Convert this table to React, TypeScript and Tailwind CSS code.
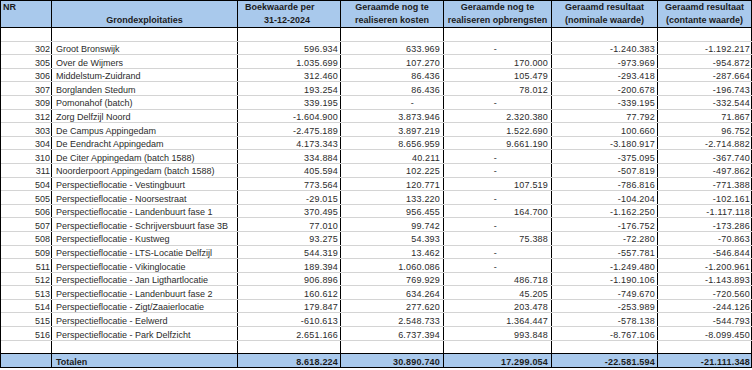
import React from 'react';

type Row = [string, string, string, string, string, string, string];

const ROWS: Row[] = [
  ['302', 'Groot Bronswijk', '596.934', '633.969', '-', '-1.240.383', '-1.192.217'],
  ['305', 'Over de Wijmers', '1.035.699', '107.270', '170.000', '-973.969', '-954.872'],
  ['306', 'Middelstum-Zuidrand', '312.460', '86.436', '105.479', '-293.418', '-287.664'],
  ['307', 'Borglanden Stedum', '193.254', '86.436', '78.012', '-200.678', '-196.743'],
  ['309', 'Pomonahof (batch)', '339.195', '-', '-', '-339.195', '-332.544'],
  ['312', 'Zorg Delfzijl Noord', '-1.604.900', '3.873.946', '2.320.380', '77.792', '71.867'],
  ['303', 'De Campus Appingedam', '-2.475.189', '3.897.219', '1.522.690', '100.660', '96.752'],
  ['304', 'De Eendracht Appingedam', '4.173.343', '8.656.959', '9.661.190', '-3.180.917', '-2.714.882'],
  ['310', 'De Citer Appingedam (batch 1588)', '334.884', '40.211', '-', '-375.095', '-367.740'],
  ['311', 'Noorderpoort Appingedam (batch 1588)', '405.594', '102.225', '-', '-507.819', '-497.862'],
  ['504', 'Perspectieflocatie - Vestingbuurt', '773.564', '120.771', '107.519', '-786.816', '-771.388'],
  ['505', 'Perspectieflocatie - Noorsestraat', '-29.015', '133.220', '-', '-104.204', '-102.161'],
  ['506', 'Perspectieflocatie - Landenbuurt fase 1', '370.495', '956.455', '164.700', '-1.162.250', '-1.117.118'],
  ['507', 'Perspectieflocatie - Schrijversbuurt fase 3B', '77.010', '99.742', '-', '-176.752', '-173.286'],
  ['508', 'Perspectieflocatie - Kustweg', '93.275', '54.393', '75.388', '-72.280', '-70.863'],
  ['509', 'Perspectieflocatie - LTS-Locatie Delfzijl', '544.319', '13.462', '-', '-557.781', '-546.844'],
  ['511', 'Perspectieflocatie - Vikinglocatie', '189.394', '1.060.086', '-', '-1.249.480', '-1.200.961'],
  ['512', 'Perspectieflocatie - Jan Ligthartlocatie', '906.896', '769.929', '486.718', '-1.190.106', '-1.143.893'],
  ['513', 'Perspectieflocatie - Landenbuurt fase 2', '160.612', '634.264', '45.205', '-749.670', '-720.560'],
  ['514', 'Perspectieflocatie - Zigt/Zaaierlocatie', '179.847', '277.620', '203.478', '-253.989', '-244.126'],
  ['515', 'Perspectieflocatie - Eelwerd', '-610.613', '2.548.733', '1.364.447', '-578.138', '-544.793'],
  ['516', 'Perspectieflocatie - Park Delfzicht', '2.651.166', '6.737.394', '993.848', '-8.767.106', '-8.099.450'],
];

const GRID = 'grid grid-cols-[51px_186px_103px_103px_108px_106px_94px]';
const CELL = 'border-r border-black overflow-hidden whitespace-nowrap';

// dash placement differs per column (excel accounting format)
const DASH_PAD = ['pr-[2px]', 'pr-[29px]', 'pr-[54px]', 'pr-[2px]', 'pr-[2px]'];
const NUM_PAD = ['pr-[2px]', 'pr-[3px]', 'pr-[3px]', 'pr-[2px]', 'pr-[1px]'];

function DataRow({ row }: { row?: Row }) {
  return (
    <div className={`${GRID} h-[13.6px] border-b border-[#d4d4d4] text-[9px] leading-[12px] text-[#2b2b2b]`}>
      <div className={`${CELL} text-right pr-[1px] pt-[1.5px]`}>{row?.[0]}</div>
      <div className={`${CELL} pl-[4px] pt-[1.5px]`}>{row?.[1]}</div>
      {[2, 3, 4, 5, 6].map((i, k) => (
        <div
          key={i}
          className={`${CELL} text-right pt-[1.5px] tracking-[0.2px] ${row?.[i] === '-' ? DASH_PAD[k] : NUM_PAD[k]}`}
        >
          {row?.[i]}
        </div>
      ))}
    </div>
  );
}

export default function App() {
  return (
    <div className="w-[752px] bg-white font-['Liberation_Sans',Arial,sans-serif]">
      <div className="border-l border-black">
        {/* header */}
        <div className={`${GRID} h-[28px] border-t border-b border-black bg-[#a9c9ec] text-[9px] font-bold leading-[13px] text-[#1c1c1c]`}>
          <div className={`${CELL} pl-[2px]`}>NR</div>
          <div className={`${CELL} text-center pt-[13px]`}>Grondexploitaties</div>
          <div className={CELL}>
            <div className="pl-[7px]">Boekwaarde per</div>
            <div className="pl-[26px]">31-12-2024</div>
          </div>
          <div className={`${CELL} text-center`}>
            <div>Geraamde nog te</div>
            <div>realiseren kosten</div>
          </div>
          <div className={`${CELL} text-center`}>
            <div>Geraamde nog te</div>
            <div>realiseren opbrengsten</div>
          </div>
          <div className={`${CELL} text-center`}>
            <div>Geraamd resultaat</div>
            <div>(nominale waarde)</div>
          </div>
          <div className={`${CELL} text-center`}>
            <div>Geraamd resultaat</div>
            <div>(contante waarde)</div>
          </div>
        </div>

        <DataRow />
        {ROWS.map((r) => (
          <DataRow key={r[0]} row={r} />
        ))}

        {/* empty row before totals */}
        <div className={`${GRID} h-[12.4px]`}>
          {[0, 1, 2, 3, 4, 5, 6].map((i) => (
            <div key={i} className={CELL} />
          ))}
        </div>

        {/* totals */}
        <div className={`${GRID} h-[15px] border-t border-b border-black bg-[#a9c9ec] text-[9px] font-bold leading-[10px] text-[#1c1c1c]`}>
          <div className={CELL} />
          <div className={`${CELL} pl-[4px] pt-[3px]`}>Totalen</div>
          <div className={`${CELL} text-right pr-[2px] pt-[3px] tracking-[0.2px]`}>8.618.224</div>
          <div className={`${CELL} text-right pr-[3px] pt-[3px] tracking-[0.2px]`}>30.890.740</div>
          <div className={`${CELL} text-right pr-[3px] pt-[3px] tracking-[0.2px]`}>17.299.054</div>
          <div className={`${CELL} text-right pr-[2px] pt-[3px] tracking-[0.2px]`}>-22.581.594</div>
          <div className={`${CELL} text-right pr-[1px] pt-[3px] tracking-[0.2px]`}>-21.111.348</div>
        </div>
      </div>
    </div>
  );
}
